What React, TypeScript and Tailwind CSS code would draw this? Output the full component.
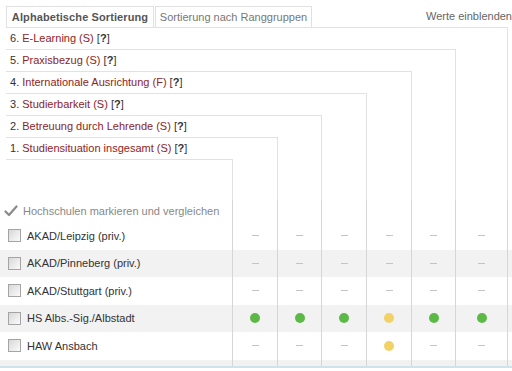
const labels = [
  { n: 6, name: "E-Learning (S)", cls: "row-start-1 col-start-1 col-span-7" },
  { n: 5, name: "Praxisbezug (S)", cls: "row-start-2 col-start-1 col-span-6" },
  { n: 4, name: "Internationale Ausrichtung (F)", cls: "row-start-3 col-start-1 col-span-5" },
  { n: 3, name: "Studierbarkeit (S)", cls: "row-start-4 col-start-1 col-span-4" },
  { n: 2, name: "Betreuung durch Lehrende (S)", cls: "row-start-5 col-start-1 col-span-3" },
  { n: 1, name: "Studiensituation insgesamt (S)", cls: "row-start-6 col-start-1 col-span-2" },
];

// vertical lines of the stepped header
const verticals = [
  "col-start-8 row-start-1 row-end-8",
  "col-start-7 row-start-2 row-end-8",
  "col-start-6 row-start-3 row-end-8",
  "col-start-5 row-start-4 row-end-8",
  "col-start-4 row-start-5 row-end-8",
  "col-start-3 row-start-6 row-end-8",
  "col-start-2 row-start-7 row-end-8",
];

const colWidths = ["w-[45px]", "w-[44px]", "w-[45px]", "w-[45px]", "w-[44px]", "w-[52px]"];

type V = "-" | "g" | "y";

const schools: { name: string; values: V[] }[] = [
  { name: "AKAD/Leipzig (priv.)", values: ["-", "-", "-", "-", "-", "-"] },
  { name: "AKAD/Pinneberg (priv.)", values: ["-", "-", "-", "-", "-", "-"] },
  { name: "AKAD/Stuttgart (priv.)", values: ["-", "-", "-", "-", "-", "-"] },
  { name: "HS Albs.-Sig./Albstadt", values: ["g", "g", "g", "y", "g", "g"] },
  { name: "HAW Ansbach", values: ["-", "-", "-", "y", "-", "-"] },
  { name: "HAW Aschaffenburg", values: ["-", "-", "-", "-", "-", "-"] },
];

function Mark({ v }: { v: V }) {
  if (v === "g") return <span className="h-[10px] w-[10px] rounded-full bg-[#5cb947]" />;
  if (v === "y") return <span className="h-[10px] w-[10px] rounded-full bg-[#f2d266]" />;
  return <span className="h-px w-[7px] bg-[#c4c4c4]" />;
}

export default function App() {
  return (
    <div className="relative h-[371px] w-[512px] overflow-hidden bg-white font-['Liberation_Sans',Arial,sans-serif]">
      {/* tabs */}
      <div className="flex items-end pl-[6px] pt-[6px]">
        <div className="flex h-[21px] w-[148px] items-center justify-center border-x border-t border-[#e0e0e0] text-[11px] font-bold tracking-[0.1px] text-[#555]">
          Alphabetische Sortierung
        </div>
        <div className="ml-px flex h-[21px] w-[157px] items-center justify-center border-x border-t border-[#e0e0e0] text-[11px] text-[#777]">
          Sortierung nach Ranggruppen
        </div>
        <div className="flex h-[21px] flex-1 items-center justify-end overflow-hidden whitespace-nowrap text-[11px] text-[#666]">
          Werte einblenden
        </div>
      </div>

      {/* stepped header */}
      <div className="ml-[6px] grid grid-cols-[226px_45px_44px_45px_45px_44px_52px_5px] grid-rows-[22px_22px_22px_22px_22px_22px_41px]">
        {labels.map((l) => (
          <div
            key={l.n}
            className={`${l.cls} flex items-center border-t border-[#e2e2e2] pl-[4px] text-[11px] whitespace-nowrap text-[#333]`}
          >
            {l.n}.&nbsp;<span className="text-[#8e2424]">{l.name}</span>&nbsp;[<span className="font-bold">?</span>]
          </div>
        ))}
        {verticals.map((c) => (
          <div key={c} className={`${c} border-l border-[#e2e2e2]`} />
        ))}
        <div className="col-start-1 row-start-7 border-t border-[#e2e2e2]" />
      </div>

      {/* compare row */}
      <div className="flex h-[22px]">
        <div className="flex w-[232px] items-center gap-[5px] pl-[4px] text-[11px] text-[#888]">
          <svg width="14" height="12" viewBox="0 0 14 12">
            <path d="M1.5 6.5 L5 10 L12.5 1.5" fill="none" stroke="#8a8a8a" strokeWidth="2.2" strokeLinecap="round" strokeLinejoin="round" />
          </svg>
          Hochschulen markieren und vergleichen
        </div>
        {colWidths.map((w, i) => (
          <div key={i} className={`${w} border-l border-[#d6d6d6]`} />
        ))}
        <div className="flex-1 border-l border-[#d6d6d6]" />
      </div>

      {/* schools */}
      {schools.map((s, r) => (
        <div key={s.name} className={`flex h-[27.5px] ${r % 2 === 1 ? "bg-[#f2f2f2]" : "bg-white"}`}>
          <div className="flex w-[232px] items-center pl-[8px] text-[11px] text-[#333]">
            <span className="mr-[6px] h-[13px] w-[13px] border border-[#a4a4a4] bg-linear-to-br from-[#d8d8d8] to-[#fbfbfb]" />
            {s.name}
          </div>
          {colWidths.map((w, i) => (
            <div key={i} className={`${w} flex items-center justify-center border-l border-[#d6d6d6]`}>
              <Mark v={s.values[i]} />
            </div>
          ))}
          <div className="flex-1 border-l border-[#d6d6d6]" />
        </div>
      ))}

      {/* bottom panel edge */}
      <div className="absolute inset-x-0 top-[366px] bottom-0 border-t-2 border-[#cfe3ec] bg-white" />
    </div>
  );
}
